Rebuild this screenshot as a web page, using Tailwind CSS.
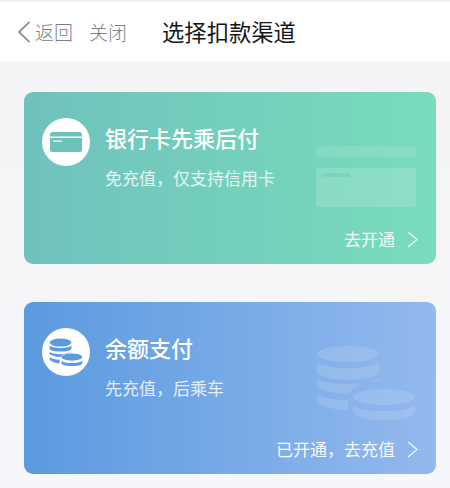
<!DOCTYPE html>
<html lang="zh"><head><meta charset="utf-8">
<script src="https://cdn.jsdelivr.net/npm/@tailwindcss/browser@4"></script>
</head>
<body class="m-0 bg-[#f5f5f7]">
<div class="w-[450px] h-[488px] overflow-hidden flex flex-col bg-gradient-to-b from-[#f4f4f5] to-[#f6f7fb] font-['Noto_Sans_CJK_SC','Noto_Sans',sans-serif]">
  <div class="h-[2px] bg-[#eef1f6]"></div>
  <header class="h-[59px] bg-white flex items-center relative">
    <svg class="ml-[17px] w-[14px] h-[22px]" viewBox="0 0 14 22" fill="none" stroke="#808080" stroke-width="1.7"><path d="M12.5 1 L2 11 L12.5 21"/></svg>
    <span class="ml-[4px] text-[19px] leading-none text-[#808080] font-light">返回</span>
    <span class="ml-[16px] text-[19px] leading-none text-[#808080] font-light">关闭</span>
    <span class="ml-[35px] text-[22.3px] leading-none text-[#161616]">选择扣款渠道</span>
  </header>
  <main class="flex flex-col gap-[38px] pt-[31px] px-[24px]">
    <section class="relative h-[172px] w-[412px] rounded-[9px] overflow-hidden bg-gradient-to-r from-[#6fc2bc] to-[#79dcbc] text-white">
      <div class="absolute left-[292px] top-[54px] w-[100px] flex flex-col gap-[11px]">
        <div class="h-[11px] rounded-[3px] bg-white/10"></div>
        <div class="relative h-[39px] rounded-[3px] bg-white/15"><div class="absolute left-[7px] top-[5px] w-[27px] h-[4px] bg-[#6fd0b8]/60"></div></div>
      </div>
      <div class="flex items-start pl-[18px] pt-[26px]">
        <div class="w-[48px] h-[48px] rounded-full bg-white flex items-center justify-center">
          <svg width="32" height="20" viewBox="0 0 32 20"><rect x="0" y="0" width="32" height="20" rx="2.500" fill="#6cc1b9"/><rect x="0" y="4.500" width="32" height="1.500" fill="#fff"/><rect x="3" y="8.500" width="9" height="1.200" fill="#fff"/></svg>
        </div>
        <div class="ml-[15px] flex flex-col">
          <h2 class="text-[22px] leading-[32px] font-medium m-0 mt-[3px]">银行卡先乘后付</h2>
          <p class="text-[17px] leading-[24px] mt-[13px] text-white/80 m-0">免充值，仅支持信用卡</p>
        </div>
      </div>
      <div class="absolute right-[18px] bottom-[13px] flex items-center gap-[12px] text-[17px] leading-[24px] text-white/95">
        <span>去开通</span>
        <svg width="11" height="17" viewBox="0 0 11 17" fill="none" stroke="#fff" stroke-opacity=".85" stroke-width="1.3"><path d="M1 1 L10 8.5 L1 16"/></svg>
      </div>
    </section>
    <section class="relative h-[172px] w-[412px] rounded-[9px] overflow-hidden bg-gradient-to-r from-[#5b9adf] to-[#93b9ee] text-white">
      <svg class="absolute left-[292px] top-[43px]" width="100" height="77" viewBox="0 0 100 77" fill="#fff" fill-opacity=".13">
        <ellipse cx="32" cy="9" rx="31" ry="8"/>
        <path d="M1 17 C8 25 56 25 63 17 V28 C56 37 8 37 1 28 Z"/>
        <path d="M1 33 C8 41 56 41 63 33 V36 C46 36 37 42 33 49 C20 49 8 46 1 42 Z"/>
        <path d="M1 49 C8 53 20 55 32 55 V65 C18 65 6 62 1 57 Z"/>
        <ellipse cx="68" cy="52" rx="31" ry="8"/>
        <path d="M37 60 C44 68 92 68 99 60 V68 C92 78 44 78 37 68 Z"/>
      </svg>
      <div class="flex items-start pl-[18px] pt-[26px]">
        <div class="w-[48px] h-[48px] rounded-full bg-white flex items-center justify-center">
          <svg width="36" height="29" viewBox="0 0 36 32" fill="#5b9ade">
            <ellipse cx="12" cy="5" rx="12" ry="4.500"/>
            <path d="M0 8 C3 12 21 12 24 8 V12 C21 16 3 16 0 12 Z"/>
            <path d="M0 15 C3 19 21 19 24 15 V16 C18 16 14 18 12 21 C6 21 2 19 0 18 Z"/>
            <path d="M0 21 C2 23 6 24 11 24 V28 C6 28 2 26 0 24 Z"/>
            <ellipse cx="24.500" cy="21" rx="11.500" ry="4"/>
            <path d="M13 25 C16 28.500 33 28.500 36 25 V28 C33 32 16 32 13 28 Z"/>
          </svg>
        </div>
        <div class="ml-[15px] flex flex-col">
          <h2 class="text-[22px] leading-[32px] font-medium m-0 mt-[3px]">余额支付</h2>
          <p class="text-[17px] leading-[24px] mt-[13px] text-white/80 m-0">先充值，后乘车</p>
        </div>
      </div>
      <div class="absolute right-[18px] bottom-[13px] flex items-center gap-[12px] text-[17px] leading-[24px] text-white/95">
        <span>已开通，去充值</span>
        <svg width="11" height="17" viewBox="0 0 11 17" fill="none" stroke="#fff" stroke-opacity=".85" stroke-width="1.3"><path d="M1 1 L10 8.5 L1 16"/></svg>
      </div>
    </section>
  </main>
</div>
</body></html>
